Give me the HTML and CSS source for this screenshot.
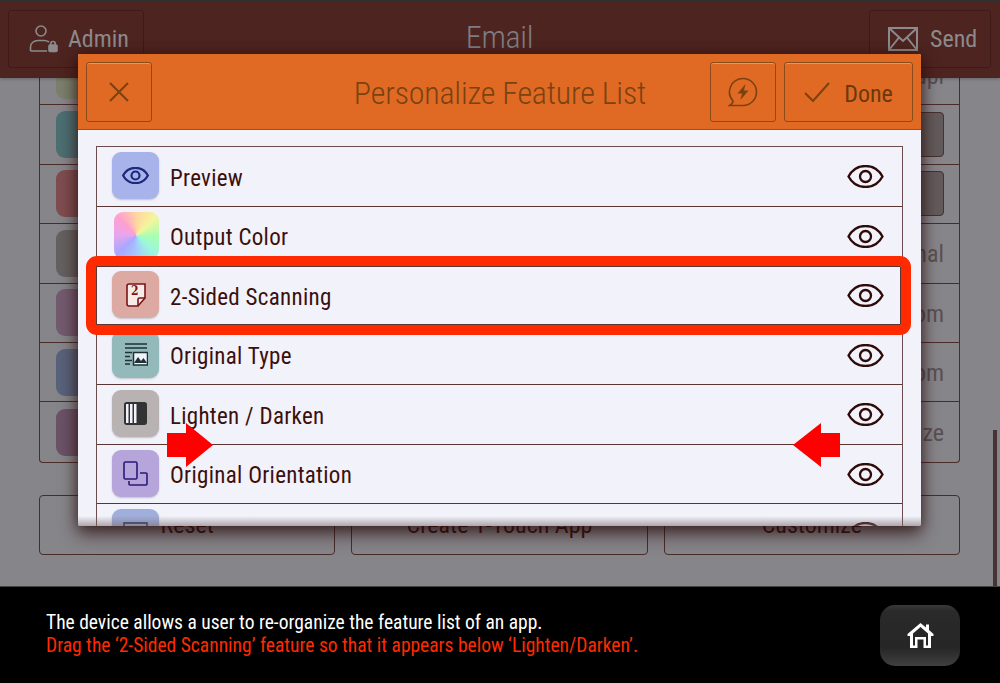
FILE: index.html
```html
<!DOCTYPE html>
<html lang="en">

<head>
    <meta charset="UTF-8">
    <meta name="viewport" content="width=device-width, initial-scale=1.0">
    <title>Personalize Feature List</title>
    <link rel="stylesheet" href="styles.css">
</head>

<body>
    <svg class="defs" width="0" height="0">
        <symbol id="eye" viewBox="0 0 37 23">
            <path d="M1.5 11.5C9 -2.5 28 -2.5 35.5 11.5C28 25.5 9 25.5 1.5 11.5Z" fill="none" stroke="currentColor" />
            <circle cx="18.5" cy="11.5" r="5.5" fill="none" stroke="currentColor" />
        </symbol>
    </svg>

    <div class="screen">
        <div class="topbar">
            <div class="top-btn admin">
                <svg width="30" height="30" viewBox="0 0 30 30" fill="none" stroke="currentColor" stroke-width="1.6">
                    <circle cx="12" cy="7" r="5" />
                    <path d="M1.5 27V23C1.5 19 5 16.5 9 16.5H15C17 16.5 18.5 17 20 18M1.5 27H18" />
                    <rect x="20" y="21" width="8" height="6.5" rx="1" fill="currentColor" />
                    <path d="M21.8 21V19.5C21.8 16.8 26.2 16.8 26.2 19.5V21" />
                </svg>
                <span>Admin</span>
            </div>
            <div class="top-title">Email</div>
            <div class="top-btn send">
                <svg width="30" height="24" viewBox="0 0 30 24" fill="none" stroke="currentColor" stroke-width="2">
                    <rect x="1" y="1" width="28" height="22" />
                    <path d="M1 1L15 14L29 1M1 23L11 10.5M29 23L19 10.5" />
                </svg>
                <span>Send</span>
            </div>
        </div>

        <div class="content">
            <div class="feature-list">
                <div class="feature-row"><i class="tile tile-olive"></i><span class="value">Dupl</span></div>
                <div class="feature-row"><i class="tile tile-teal"></i><b class="select"></b></div>
                <div class="feature-row"><i class="tile tile-red"></i><b class="select"></b></div>
                <div class="feature-row"><i class="tile tile-gray"></i><span class="value">Original</span></div>
                <div class="feature-row"><i class="tile tile-plum"></i><span class="value">Custom</span></div>
                <div class="feature-row"><i class="tile tile-slate"></i><span class="value">Custom</span></div>
                <div class="feature-row"><i class="tile tile-mauve"></i><span class="value">Optimize</span></div>
            </div>
            <div class="actions">
                <div class="action">Reset</div>
                <div class="action">Create 1-Touch App</div>
                <div class="action">Customize</div>
            </div>
        </div>

        <div class="scrollbar"></div>

        <div class="modal">
            <div class="modal-head">
                <div class="head-btn close">
                    <svg width="22" height="22" viewBox="0 0 22 22" stroke="currentColor" stroke-width="2"><path d="M2 2L20 20M20 2L2 20" /></svg>
                </div>
                <div class="modal-title">Personalize Feature List</div>
                <div class="head-btn bolt">
                    <svg width="30" height="30" viewBox="0 0 30 30" fill="none" stroke="currentColor" stroke-width="1.6">
                        <path d="M15 1.5A13.5 13.5 0 1 1 15 28.5H1.5C4 27 5 25.5 5 24A13.5 13.5 0 0 1 15 1.5Z" />
                        <path d="M17.5 7L9.5 16.5H14L12.5 23L20.5 13.5H16Z" fill="currentColor" stroke="none" />
                    </svg>
                </div>
                <div class="head-btn done">
                    <svg width="26" height="20" viewBox="0 0 26 20" fill="none" stroke="currentColor" stroke-width="2"><path d="M1 11L9 19L25 1" /></svg>
                    <span>Done</span>
                </div>
            </div>
            <div class="modal-body">
                <div class="rows">
                    <div class="row">
                        <div class="icon icon-preview">
                            <svg width="27" height="17" viewBox="0 0 37 23"><use href="#eye" /></svg>
                        </div>
                        <span>Preview</span>
                        <svg class="eye" width="37" height="23"><use href="#eye" /></svg>
                    </div>
                    <div class="row">
                        <div class="icon icon-color"></div>
                        <span>Output Color</span>
                        <svg class="eye" width="37" height="23"><use href="#eye" /></svg>
                    </div>
                    <div class="row">
                        <div class="icon icon-sided">
                            <svg width="20" height="24" viewBox="0 0 20 24" fill="none" stroke="currentColor" stroke-width="1.6">
                                <path d="M3 1H19V15L12 23H3C1.8 23 1 22.2 1 21V3C1 1.8 1.8 1 3 1Z" fill="#f6ebe9" />
                                <path d="M19 15H13.5C12.6 15 12 15.6 12 16.5V23" />
                                <text x="5" y="12" class="mini">2</text>
                            </svg>
                        </div>
                        <span>2-Sided Scanning</span>
                        <svg class="eye" width="37" height="23"><use href="#eye" /></svg>
                    </div>
                    <div class="row">
                        <div class="icon icon-type">
                            <svg width="24" height="24" viewBox="0 0 24 24" stroke="currentColor" stroke-width="1.5" fill="none">
                                <path d="M1 2H23M1 6H23M1 10.5H8M1 14.5H6M1 18.5H8M1 22H6" />
                                <rect x="9.5" y="10.5" width="14" height="12.5" fill="#f1f2fa" />
                                <path d="M10 21L14 15L17 19L19.5 16L23 21" fill="currentColor" stroke="none" />
                            </svg>
                        </div>
                        <span>Original Type</span>
                        <svg class="eye" width="37" height="23"><use href="#eye" /></svg>
                    </div>
                    <div class="row">
                        <div class="icon icon-lighten">
                            <svg width="23" height="23" viewBox="0 0 23 23">
                                <rect x="0.75" y="0.75" width="21.5" height="21.5" rx="2" fill="#333" stroke="#333" stroke-width="1.5" />
                                <path d="M2 2H4.5V21H2ZM6 2H8.5V21H6ZM10 2H12.5V21H10Z" fill="#f1f2fa" />
                            </svg>
                        </div>
                        <span>Lighten / Darken</span>
                        <svg class="eye" width="37" height="23"><use href="#eye" /></svg>
                    </div>
                    <div class="row">
                        <div class="icon icon-orient">
                            <svg width="25" height="25" viewBox="0 0 25 25" fill="none" stroke="currentColor" stroke-width="1.6">
                                <rect x="1" y="1" width="13" height="17" rx="1.5" />
                                <path d="M17 12H23C23.6 12 24 12.4 24 13V23C24 23.6 23.6 24 23 24H7C6.4 24 6 23.6 6 23V20" />
                            </svg>
                        </div>
                        <span>Original Orientation</span>
                        <svg class="eye" width="37" height="23"><use href="#eye" /></svg>
                    </div>
                    <div class="row">
                        <div class="icon icon-size">
                            <svg width="25" height="25" viewBox="0 0 25 25" fill="none" stroke="currentColor" stroke-width="1.6">
                                <rect x="1" y="3" width="23" height="20" />
                                <path d="M12.5 6L15 11H10Z" fill="currentColor" stroke="none" />
                            </svg>
                        </div>
                        <span></span>
                        <svg class="eye" width="37" height="23"><use href="#eye" /></svg>
                    </div>
                </div>
            </div>
        </div>

        <div class="highlight"></div>
        <svg class="arrow arrow-right" width="46" height="44" viewBox="0 0 46 44"><path d="M0 10H19V0L46 22L19 44V34H0Z" /></svg>
        <svg class="arrow arrow-left" width="47" height="44" viewBox="0 0 47 44"><path d="M47 10H28V0L0 22L28 44V34H47Z" /></svg>
    </div>

    <div class="footer">
        <div class="message">
            <div>The device allows a user to re-organize the feature list of an app.</div>
            <div class="task">Drag the ‘2-Sided Scanning’ feature so that it appears below ‘Lighten/Darken’.</div>
        </div>
        <div class="home-btn">
            <svg width="27" height="27" viewBox="0 0 27 27" fill="#fff">
                <path d="M13.5 1L19 5.5V2.5H22V8L26.5 12V14H24V26H16.5V17.5H10.5V26H3V14H0.5V12ZM13.5 5L6 11.5V23.5H8V15H19V23.5H21V11.5Z" fill-rule="evenodd" />
            </svg>
        </div>
    </div>
</body>

</html>
```

FILE: styles.css
```css
* {
    margin: 0;
    padding: 0;
    box-sizing: border-box;
}

body {
    width: 1000px;
    height: 683px;
    overflow: hidden;
    background: #000;
    font-family: "Roboto Condensed", Roboto, sans-serif;
    font-stretch: condensed;
}

.defs {
    display: block;
    height: 0;
}

.screen {
    position: relative;
    height: 586px;
    background: #86858a;
    overflow: hidden;
    display: flex;
    flex-direction: column;
}

/* top bar, dimmed behind the dialog */
.topbar {
    position: relative;
    z-index: 1;
    flex: none;
    height: 78px;
    padding: 10px 9px 10px 8px;
    display: flex;
    align-items: flex-start;
    background: #4e2420;
    border-top: 1px solid #2f3030;
    box-shadow: 0 1px 3px rgba(0, 0, 0, 0.25);
    color: #8c8a8c;
}

.top-btn {
    height: 58px;
    margin-top: -1px;
    display: flex;
    align-items: center;
    border: 1px solid #3e1b18;
    border-radius: 3px;
    font-size: 24px;
}

.admin {
    width: 136px;
    padding-left: 20px;
    gap: 9px;
}

.send {
    width: 122px;
    padding-left: 18px;
    gap: 12px;
}

.top-title {
    flex: 1;
    padding-right: 14px;
    margin-top: -3px;
    text-align: center;
    font-size: 32px;
    font-weight: 300;
    line-height: 58px;
    letter-spacing: -0.3px;
    color: #7f7d80;
}

/* page behind the dialog */
.content {
    flex: 1;
    padding: 0 40px 0 39px;
    color: #3a1512;
}

.feature-list {
    margin-top: -32px;
    border: 1px solid #4a2c2b;
    border-top: none;
    border-radius: 0 0 4px 4px;
}

.feature-row {
    height: 59.4px;
    padding: 0 15px 0 16px;
    display: flex;
    align-items: center;
    justify-content: space-between;
    border-bottom: 1px solid #4a2c2b;
}

.feature-row:last-child {
    border-bottom: none;
}

.tile {
    width: 47px;
    height: 47px;
    border-radius: 9px;
}

.tile-olive { background: #7b7f6c; }
.tile-teal { background: #4c6f72; }
.tile-red { background: #7f4d50; }
.tile-gray { background: #646160; }
.tile-plum { background: #735a6f; }
.tile-slate { background: #58627b; }
.tile-mauve { background: #6a5267; }

.value {
    padding-top: 2px;
    font-size: 24px;
    color: #5a5052;
}

.select {
    width: 200px;
    height: 45px;
    background: #625a5b;
    border: 1px solid #4a3030;
    border-radius: 4px;
}

.actions {
    margin-top: 32px;
    display: flex;
    gap: 16px;
}

.action {
    flex: 1;
    height: 60px;
    display: flex;
    align-items: center;
    justify-content: center;
    border: 1px solid #4a2c2b;
    border-radius: 4px;
    font-size: 24px;
}

.scrollbar {
    position: absolute;
    left: 993px;
    top: 430px;
    width: 4px;
    height: 156px;
    background: #463434;
}

/* dialog */
.modal {
    position: absolute;
    z-index: 2;
    left: 78px;
    top: 54px;
    width: 843px;
    height: 472px;
    display: flex;
    flex-direction: column;
    border-radius: 2px;
    background: #f1f2fa;
    box-shadow: 0 8px 18px rgba(40, 12, 10, 0.7), 0 0 12px rgba(40, 12, 10, 0.45);
    overflow: hidden;
}

.modal-head {
    flex: none;
    height: 76px;
    padding: 8px 8px 7px;
    display: flex;
    align-items: stretch;
    gap: 8px;
    background: #e06a24;
    border-bottom: 1px solid #a34d18;
    color: #7a4210;
}

.modal-title {
    flex: 1;
    padding-left: 138px;
    text-align: center;
    font-size: 32px;
    font-weight: 300;
    line-height: 62px;
    letter-spacing: -0.2px;
}

.head-btn {
    display: flex;
    align-items: center;
    justify-content: center;
    border: 1px solid #8a4c18;
    border-radius: 3px;
    box-shadow: inset 0 1px 0 #eb9a3c;
}

.close { width: 66px; }
.bolt { width: 66px; }

.done {
    width: 129px;
    gap: 14px;
    font-size: 24px;
}

.done span {
    padding-top: 4px;
    color: #6b380e;
}

.modal-body {
    position: relative;
    flex: 1;
    padding: 16px 18px 0;
    overflow: hidden;
}

.modal-body::after {
    content: "";
    position: absolute;
    left: 0;
    right: 0;
    bottom: 0;
    height: 10px;
    background: linear-gradient(rgba(120, 105, 110, 0), rgba(120, 105, 110, 0.55));
}

.rows {
    border: 1px solid #6b4b4b;
    border-bottom: none;
}

.row {
    height: 59.5px;
    padding: 0 18px 1px 15px;
    display: flex;
    align-items: center;
    gap: 11px;
    border-bottom: 1px solid #5a3534;
    font-size: 23px;
    letter-spacing: 0.3px;
    color: #3c0f0c;
}

.row span {
    flex: 1;
    padding-top: 5px;
}

.eye {
    margin-top: 2px;
    color: #2e0a08;
    stroke-width: 2.3;
}

.icon {
    width: 47px;
    height: 47px;
    border-radius: 9px;
    display: flex;
    align-items: center;
    justify-content: center;
    box-shadow: 0 1px 2px rgba(0, 0, 0, 0.2);
}

.icon-preview { background: #a7b3ea; color: #1c2a7c; stroke-width: 3; }
.icon-sided { background: #dcaaa3; color: #7a1414; }
.icon-type { background: #94b9bb; color: #1d3336; }
.icon-lighten { background: #b8b3b2; }
.icon-orient { background: #b6a5da; color: #2a1a78; }
.icon-size { background: #a0aedb; color: #1d2c48; }

.icon-color {
    width: 45px;
    margin-left: 2px;
    box-shadow: none;
    background: conic-gradient(#ffd6a0, #f4f59c, #a8ffb0, #9cf5dc, #a5c8ff, #a7a8ff, #e6a5f0, #ff9fd0, #ffd6a0);
}

.mini {
    font-size: 12px;
    font-weight: 700;
    font-family: "DejaVu Serif", serif;
    fill: currentColor;
    stroke: none;
}

/* things drawn over the dialog */
.highlight {
    position: absolute;
    z-index: 3;
    left: 86px;
    top: 256px;
    width: 825px;
    height: 79px;
    border: 10px solid #ff2a00;
    border-radius: 11px;
    box-shadow: inset 0 0 0 1px #5a3534;
}

.arrow {
    position: absolute;
    z-index: 3;
    top: 423px;
    fill: #ff0000;
}

.arrow-right { left: 167px; }
.arrow-left { left: 793px; }

/* instruction strip */
.footer {
    height: 97px;
    padding: 18px 40px 0 46px;
    display: flex;
    align-items: flex-start;
    justify-content: space-between;
    border-top: 1px solid #444;
    background: #000;
}

.message {
    padding-top: 6px;
    font-size: 19.5px;
    line-height: 23px;
    color: #fff;
}

.task {
    color: #ff2a00;
}

.home-btn {
    width: 80px;
    height: 61px;
    display: flex;
    align-items: center;
    justify-content: center;
    border-radius: 15px;
    background: linear-gradient(#3a3a3a, #2a2a2a 10%, #262626 70%, #404040);
}
```
